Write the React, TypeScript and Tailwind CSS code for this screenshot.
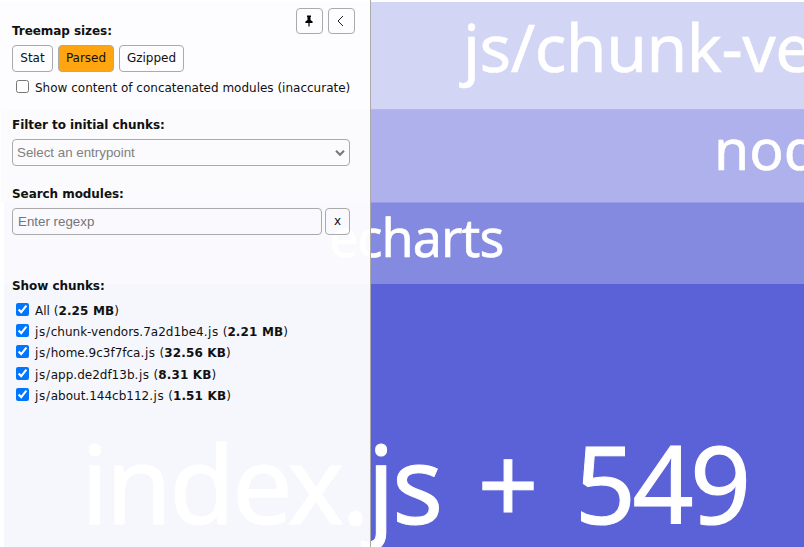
import type { ReactNode } from "react";

const chunks = [
  { name: "All", size: "2.25 MB" },
  { dir: "js/", name: "chunk-vendors.7a2d1be4", ext: ".js", size: "2.21 MB" },
  { dir: "js/", name: "home.9c3f7fca", ext: ".js", size: "32.56 KB" },
  { dir: "js/", name: "app.de2df13b", ext: ".js", size: "8.31 KB" },
  { dir: "js/", name: "about.144cb112", ext: ".js", size: "1.51 KB" },
];

function Heading({ children }: { children: ReactNode }) {
  return <h2 className="h-[15px] whitespace-nowrap font-bold leading-[15px] tracking-[-0.06px]">{children}</h2>;
}

function Treemap() {
  return (
    <main className="flex h-full flex-col overflow-hidden whitespace-nowrap bg-white pt-[2px] font-['Noto_Sans','Open_Sans',sans-serif] text-white">
      <div className="h-[107px] shrink-0 overflow-hidden bg-[#d2d5f3] pl-[463px]">
        <span className="block text-[66px] leading-[88px] tracking-[-0.5px] [-webkit-text-stroke:0.6px_white]">js/chunk-vendors.7a2d1be4.js</span>
      </div>
      <div className="ml-px h-[93px] shrink-0 overflow-hidden border-t border-[#b5b8ef] bg-[#aeb1eb] pl-[713px]">
        <span className="block text-[57px] leading-[76px] [-webkit-text-stroke:0.6px_white]">node_modules</span>
      </div>
      <div className="ml-[4px] h-[82px] shrink-0 overflow-hidden border-t border-[#989de5] bg-[#848ae0] pl-[325px]">
        <span className="block pt-px text-[52px] leading-[66px] tracking-[-0.9px] [-webkit-text-stroke:0.6px_white]">echarts</span>
      </div>
      <div className="ml-[4px] flex flex-1 overflow-hidden bg-[#5b61d6] pl-[77px] pt-[124px] text-[107px] leading-[150px] [-webkit-text-stroke:1px_white]">
        <span className="tracking-[-2.8px]">index.js</span>
        <span className="ml-[37px]">+</span>
        <span className="ml-[36px] tracking-[-3.5px]">549</span>
      </div>
    </main>
  );
}

function Sidebar() {
  return (
    <aside className="absolute inset-y-0 left-0 w-[371px] border-r border-[#aaaaaa] bg-white/95 pl-3 pr-5 pt-[24px]">
      <div className="absolute right-[15px] top-2 flex gap-[5px]">
        <button className="flex h-[26px] w-[27px] items-center justify-center rounded-[4px] border border-[#aaaaaa] pr-px">
          <svg width="8" height="14" viewBox="0 0 8 14" fill="#000">
            <path d="M2 1.6h4v1.2l-.5.5v2.7L7.6 7.6v1.3H.4V7.6L2.5 6V3.3L2 2.8z" />
            <path d="M3.4 8.6h1.2v2.9L4 13.5l-.6-2z" />
          </svg>
        </button>
        <button className="flex h-[26px] w-[27px] items-center justify-center rounded-[4px] border border-[#aaaaaa] pr-px">
          <svg width="8" height="12" viewBox="0 0 8 12" fill="none" stroke="#222" strokeWidth="1">
            <path d="M6 1 1 6l5 5" />
          </svg>
        </button>
      </div>

      <Heading>Treemap sizes:</Heading>
      <div className="mt-[6px] flex gap-[5px]">
        <button className="h-[27px] w-[41px] rounded-[4px] border border-[#aaaaaa]">Stat</button>
        <button className="h-[27px] w-[56px] rounded-[4px] border border-[#aaaaaa] bg-[#ffa50f]">Parsed</button>
        <button className="h-[27px] w-[65px] rounded-[4px] border border-[#aaaaaa]">Gzipped</button>
      </div>
      <label className="mt-2 flex h-[16px] items-start gap-1.5 whitespace-nowrap pl-1 leading-[15px]">
        <input type="checkbox" className="m-0 h-[13px] w-[13px] shrink-0" />
        <span className="pt-px">Show content of concatenated modules (inaccurate)</span>
      </label>

      <div className="mt-[22px]">
        <Heading>Filter to initial chunks:</Heading>
        <div className="mt-[6px] flex h-[27px] w-[338px] items-center justify-between rounded-[4px] border border-[#aaaaaa] pl-1 pr-[4px] font-['Liberation_Sans',sans-serif] text-[13.33px] text-[#808080]">
          <span>Select an entrypoint</span>
          <svg width="10" height="8" viewBox="0 0 10 8" fill="none" stroke="#777" strokeWidth="2">
            <path d="m1 1.8 4 4 4-4" />
          </svg>
        </div>
      </div>

      <div className="mt-[21px]">
        <Heading>Search modules:</Heading>
        <div className="mt-[6px] flex gap-[3px]">
          <input
            type="text"
            placeholder="Enter regexp"
            className="h-[27px] w-[310px] rounded-[4px] border border-[#aaaaaa] px-[5px] font-['Liberation_Sans',sans-serif] text-[13.33px] placeholder:text-[#757575]"
          />
          <button className="h-[27px] w-[25px] rounded-[4px] border border-[#aaaaaa]">x</button>
        </div>
      </div>

      <div className="mt-[44px]">
        <Heading>Show chunks:</Heading>
        <ul className="mt-[9px]">
          {chunks.map((chunk) => (
            <li key={chunk.name} className="h-[21.2px] whitespace-nowrap leading-[15px]">
              <label className="flex items-start gap-1.5 pl-1">
                <input type="checkbox" defaultChecked className="m-0 h-[13px] w-[13px] shrink-0" />
                <span className="pt-px">
                  <span className="tracking-[0.7px]">{chunk.dir}</span>
                  {chunk.name}
                  <span className="tracking-[0.6px]">{chunk.ext}</span>
                  {" ("}
                  <strong className="tracking-[0.15px]">{chunk.size}</strong>)
                </span>
              </label>
            </li>
          ))}
        </ul>
      </div>
    </aside>
  );
}

export default function App() {
  return (
    <div className="relative h-[547px] w-[804px] overflow-hidden bg-white font-['DejaVu_Sans',sans-serif] text-[12px] leading-[15px] text-[#111]">
      <Treemap />
      <Sidebar />
    </div>
  );
}
